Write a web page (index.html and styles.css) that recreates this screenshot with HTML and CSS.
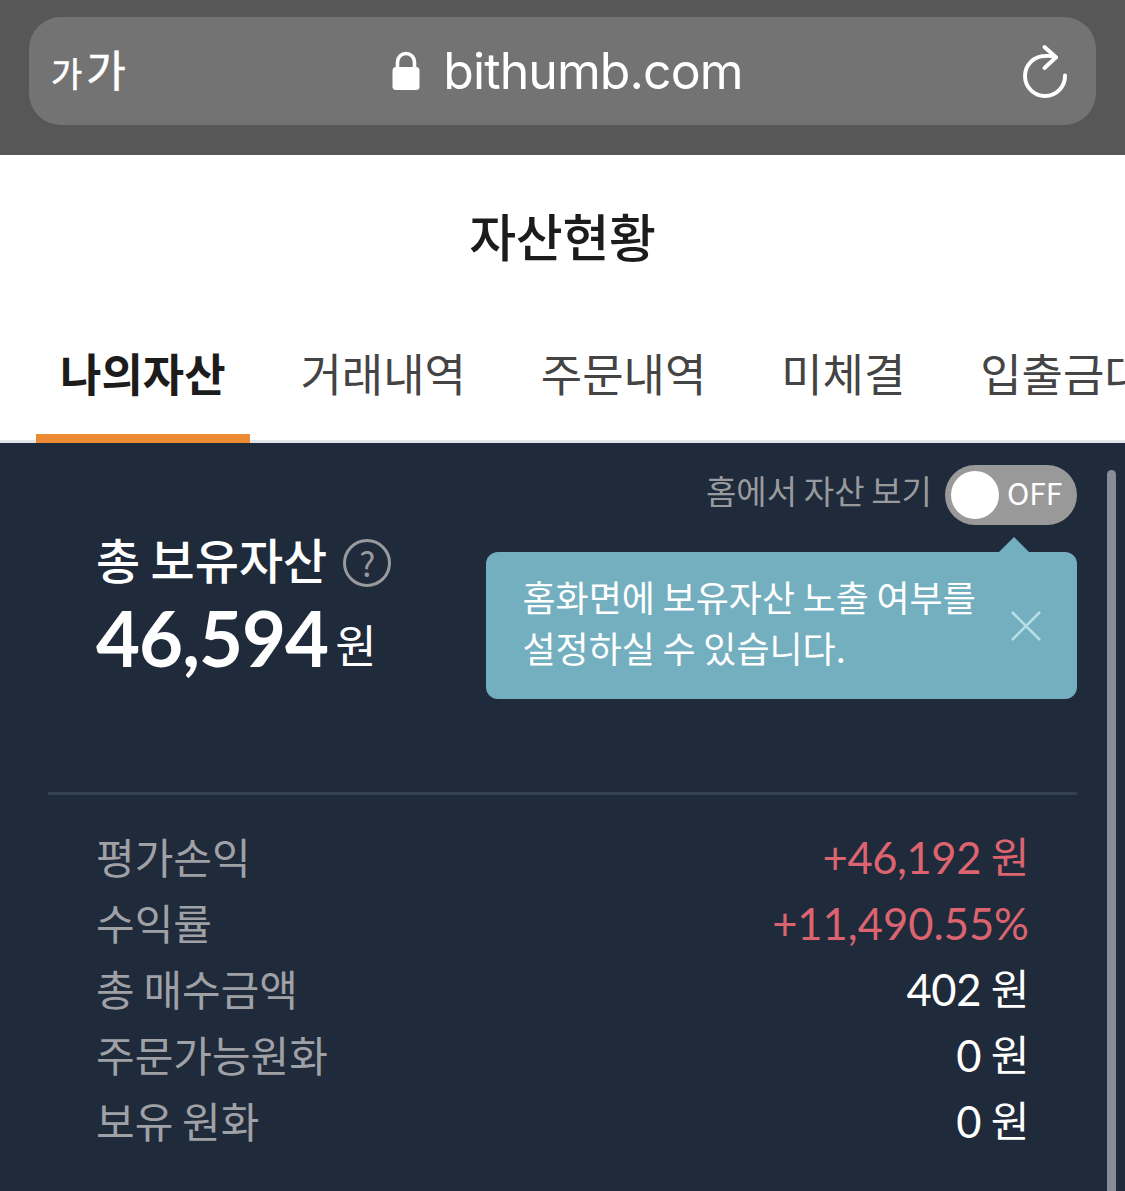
FILE: index.html
```
<!DOCTYPE html>
<html lang="ko">
<head>
    <meta charset="UTF-8">
    <title>자산현황</title>
    <meta name="viewport" content="width=device-width, initial-scale=1">
    <link rel="stylesheet" href="styles.css">
</head>
<body>
<div class="browser-bar">
    <div class="address">
        <div class="text-size"><span class="small">가</span><span class="big">가</span></div>
        <div class="url">
            <svg class="lock" width="28" height="40" viewBox="0 0 28 40">
                <path d="M5.5 18V11a8.5 8.5 0 0 1 17 0v7" fill="none" stroke="#fff" stroke-width="3.6"/>
                <rect x="0.5" y="16" width="27" height="23" rx="3.5" fill="#fff"/>
            </svg>
            <span class="host">bithumb.com</span>
        </div>
        <svg class="reload" width="46" height="58" viewBox="0 0 46 58" fill="none" stroke="#fff" stroke-width="3.9" stroke-linecap="round" stroke-linejoin="round">
            <path d="M43 33.5A20 20 0 1 1 23 14Q29 13.6 34 15.3"/>
            <path d="M22.5 5L34 15.3L22.5 26"/>
        </svg>
    </div>
</div>
<header class="title-bar"><h1>자산현황</h1></header>
<nav class="tabs">
    <a class="tab active">나의자산</a>
    <a class="tab">거래내역</a>
    <a class="tab">주문내역</a>
    <a class="tab">미체결</a>
    <a class="tab">입출금대기</a>
</nav>
<main class="assets">
    <div class="home-toggle">
        <span class="toggle-label">홈에서 자산 보기</span>
        <button class="switch"><span class="knob"></span><span class="state">OFF</span></button>
    </div>
    <div class="tooltip">
        <p>홈화면에 보유자산 노출 여부를<br>설정하실 수 있습니다.</p>
        <svg class="close" width="32" height="32" viewBox="0 0 32 32">
            <path d="M2 2L30 30M30 2L2 30" stroke="#b7dfe8" stroke-width="2.6"/>
        </svg>
    </div>
    <section class="total">
        <h2>총 보유자산 <span class="help">?</span></h2>
        <div class="amount">46,594<span class="won">원</span></div>
    </section>
    <dl class="summary">
        <div class="row"><dt>평가손익</dt><dd class="up">+46,192 <span>원</span></dd></div>
        <div class="row"><dt>수익률</dt><dd class="up rate">+11,490.55%</dd></div>
        <div class="row"><dt>총 매수금액</dt><dd>402 <span>원</span></dd></div>
        <div class="row"><dt>주문가능원화</dt><dd>0 <span>원</span></dd></div>
        <div class="row"><dt>보유 원화</dt><dd>0 <span>원</span></dd></div>
    </dl>
    <div class="scrollbar"></div>
</main>
</body>
</html>
```
FILE: styles.css
```
* { box-sizing: border-box; }
body { margin: 0; width: 1125px; height: 1191px; overflow: hidden; background: #fff; font-family: "Noto Sans CJK KR", sans-serif; }
h1, h2, p, dl, dd { margin: 0; }

.browser-bar { height: 155px; padding: 17px 29px 30px; background: #575757; }
.address { display: grid; grid-template-columns: 100px 1fr 100px; align-items: center; height: 108px; padding: 0 28px 0 22px; border-radius: 32px; background: #737373; color: #fff; }
.text-size { display: flex; align-items: baseline; gap: 4px; padding-bottom: 2px; line-height: 60px; -webkit-text-stroke: 0.6px #fff; }
.text-size .small { font-size: 34px; }
.text-size .big { font-size: 43px; }
.url { display: flex; align-items: center; justify-content: center; gap: 23px; padding-left: 16px; }
.host { font-family: Inter, sans-serif; font-size: 50px; line-height: 60px; letter-spacing: -0.9px; }
.reload { justify-self: end; }

.title-bar { height: 155px; padding-top: 42px; text-align: center; }
.title-bar h1 { font-size: 51px; line-height: 76px; font-weight: 500; letter-spacing: -0.3px; color: #1c1c1c; }

.tabs { display: flex; height: 133px; padding-left: 36px; box-shadow: inset 0 -3px #e3e4e9; overflow: hidden; }
.tab { flex: none; height: 133px; padding: 30px 24px 0; margin-right: 26.8px; font-size: 45px; line-height: 66px; color: #444; }
.tab.active { border-bottom: 9px solid #ec8b34; font-weight: 700; color: #1c1c1c; }

.assets { position: relative; height: 748px; padding: 22px 48px 0; background: #1f2a3a; color: #fff; }
.home-toggle { display: flex; justify-content: flex-end; height: 60px; }
.toggle-label { margin-right: 13px; font-size: 33px; line-height: 50px; word-spacing: -2.5px; color: #999a9e; }
.switch { display: flex; align-items: center; width: 132px; height: 60px; padding: 0 0 0 6px; border: 0; border-radius: 30px; background: #999; color: #fff; font: 30px "Noto Sans CJK KR", sans-serif; }
.knob { width: 48px; height: 48px; margin-right: 8px; border-radius: 50%; background: #fff; }
.state { padding-bottom: 7px; }

.tooltip { position: absolute; top: 109px; right: 48px; display: flex; justify-content: space-between; align-items: center; width: 591px; height: 147px; padding: 0 35px 0 36.5px; border-radius: 12px; background: #73afbf; }
.tooltip::before { content: ""; position: absolute; top: -15px; right: 48px; border: 15px solid transparent; border-top: 0; border-bottom-color: #73afbf; }
.tooltip p { padding-bottom: 7px; font-size: 36px; line-height: 51px; word-spacing: -2.5px; white-space: nowrap; }
.close { flex: none; }

.total { height: 270px; padding: 0 48px; border-bottom: 3px solid #344150; }
.total h2 { display: flex; align-items: center; gap: 16px; height: 72px; padding-bottom: 6px; font-size: 48px; font-weight: 500; line-height: 66px; word-spacing: -3px; }
.help { width: 48px; height: 48px; margin-top: 9px; border: 3px solid #999a9e; border-radius: 50%; font: 34px/42px "Noto Sans CJK KR", sans-serif; text-align: center; color: #999a9e; }
.amount { font-family: Lato, sans-serif; font-size: 76px; font-weight: 700; line-height: 82px; letter-spacing: -1px; }
.won { margin-left: 7px; font: 45px "Noto Sans CJK KR", sans-serif; letter-spacing: 0; vertical-align: 4px; }

.summary { padding: 28px 48px 0; }
.row { display: flex; justify-content: space-between; height: 66px; line-height: 66px; }
.row dt { font-size: 42px; line-height: 65px; word-spacing: -3px; color: #a0a1a6; }
.row dd { font-family: Lato, sans-serif; font-size: 43.5px; line-height: 68px; letter-spacing: -0.4px; word-spacing: -1px; }
.row dd span { font-family: "Noto Sans CJK KR", sans-serif; font-size: 42px; line-height: 1; vertical-align: 1px; }
.row .up { color: #dc6470; }
.row .rate { letter-spacing: 0; }
.scrollbar { position: absolute; top: 27px; right: 9px; width: 9px; height: 730px; border-radius: 5px; background: #888c98; }
```
